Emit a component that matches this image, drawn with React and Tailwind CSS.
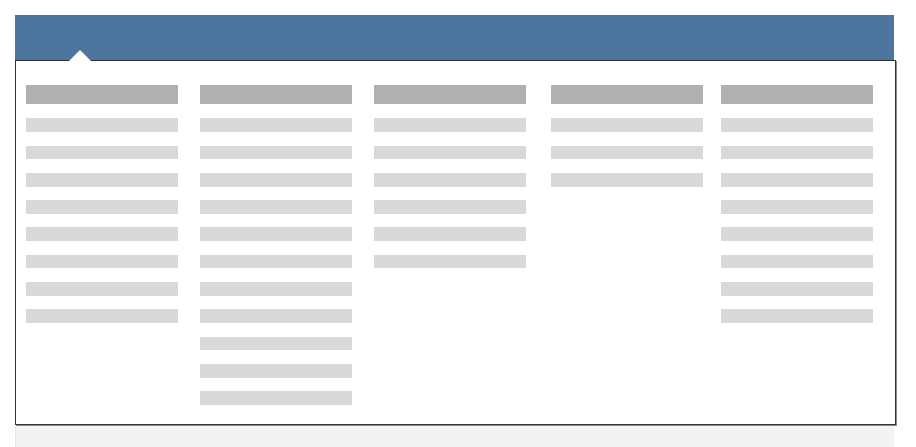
import React from 'react';

// placeholder skeleton for a mega-menu: column sizes = number of link rows
const COLUMNS = [
  { rows: 8, ml: 'ml-[10px]' },
  { rows: 11, ml: 'ml-[22px]' },
  { rows: 6, ml: 'ml-[22px]' },
  { rows: 3, ml: 'ml-[25px]' },
  { rows: 8, ml: 'ml-[18px]' },
];

const MenuColumn = ({ rows, ml }) => (
  <div className={`w-[152px] shrink-0 ${ml}`}>
    <div className="h-[19px] bg-[#b0b0b0]" />
    <div className="mt-[14.3px] flex flex-col gap-[13.6px]">
      {Array.from({ length: rows }).map((_, i) => (
        <div key={i} className="h-[13.7px] bg-[#d9d9d9]" />
      ))}
    </div>
  </div>
);

const App = () => {
  return (
    <div className="min-h-[447px] w-[916px] overflow-hidden bg-white pl-[15px] pt-[15px]">
      <div className="relative">
        {/* nav bar */}
        <div className="h-[45px] w-[879px] bg-[#4e759d]" />

        {/* caret pointing at the open item */}
        <div className="absolute left-[54px] top-[35px] z-10 h-0 w-0 border-x-[11px] border-b-[11px] border-x-transparent border-b-white" />

        {/* dropdown panel */}
        <div className="flex h-[365px] w-[881px] border border-[#333] bg-white pt-[24px] shadow-[1px_1px_0_#8a8a8a]">
          {COLUMNS.map((col, i) => (
            <MenuColumn key={i} rows={col.rows} ml={col.ml} />
          ))}
        </div>

        {/* page content below */}
        <div className="mt-[1px] h-[40px] w-[879px] border-l border-[#e6e6e6] bg-[#f3f3f3]" />
      </div>
    </div>
  );
};

export default App;
